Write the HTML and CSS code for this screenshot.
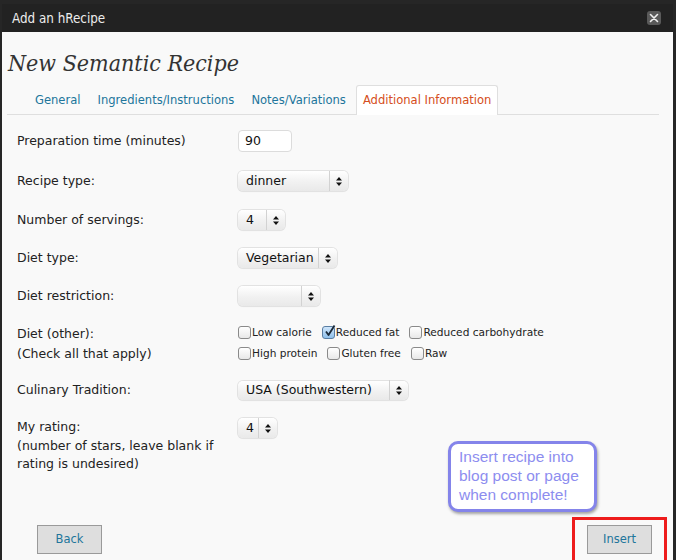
FILE: index.html
```html
<!DOCTYPE html>
<html>
<head>
<meta charset="utf-8">
<link rel="stylesheet" href="styles.css">
</head>
<body>
<div class="dialog">
  <div class="titlebar">
    <span class="title">Add an hRecipe</span>
    <span class="close"><svg width="10" height="10" viewBox="0 0 10 10"><path d="M1.5 1.5 L8.5 8.5 M8.5 1.5 L1.5 8.5" stroke="#f0f0f0" stroke-width="1.6" stroke-linecap="round"/></svg></span>
  </div>
  <div class="content">
    <h1 class="heading">New Semantic Recipe</h1>
    <ul class="tabs">
      <li class="tab">General</li>
      <li class="tab">Ingredients/Instructions</li>
      <li class="tab">Notes/Variations</li>
      <li class="tab active">Additional Information</li>
    </ul>
    <div class="form">
      <div class="row">
        <div class="label">Preparation time (minutes)</div>
        <div class="input w-prep">90</div>
      </div>
      <div class="row m1">
        <div class="label">Recipe type:</div>
        <div class="select w-type"><span class="val">dinner</span><span class="arr"><svg width="6" height="9" viewBox="0 0 6 9"><path d="M3 0 L6 3.5 L0 3.5Z M3 9 L6 5.5 L0 5.5Z" fill="#111"/></svg></span></div>
      </div>
      <div class="row m1">
        <div class="label">Number of servings:</div>
        <div class="select w-serv"><span class="val">4</span><span class="arr"><svg width="6" height="9" viewBox="0 0 6 9"><path d="M3 0 L6 3.5 L0 3.5Z M3 9 L6 5.5 L0 5.5Z" fill="#111"/></svg></span></div>
      </div>
      <div class="row">
        <div class="label">Diet type:</div>
        <div class="select w-diet"><span class="val">Vegetarian</span><span class="arr"><svg width="6" height="9" viewBox="0 0 6 9"><path d="M3 0 L6 3.5 L0 3.5Z M3 9 L6 5.5 L0 5.5Z" fill="#111"/></svg></span></div>
      </div>
      <div class="row">
        <div class="label">Diet restriction:</div>
        <div class="select w-restr"><span class="val"></span><span class="arr"><svg width="6" height="9" viewBox="0 0 6 9"><path d="M3 0 L6 3.5 L0 3.5Z M3 9 L6 5.5 L0 5.5Z" fill="#111"/></svg></span></div>
      </div>
      <div class="row top">
        <div class="label">Diet (other):<br>(Check all that apply)</div>
        <div class="checks">
          <div class="crow">
            <span class="cb"></span><span class="ct">Low calorie</span>
            <span class="cb on"><svg width="13" height="13" viewBox="0 0 13 13"><path d="M3 6.5 L5.5 10 L11.5 0.5" stroke="#1b2a3a" stroke-width="1.8" fill="none" stroke-linejoin="round"/></svg></span><span class="ct">Reduced fat</span>
            <span class="cb"></span><span class="ct">Reduced carbohydrate</span>
          </div>
          <div class="crow">
            <span class="cb"></span><span class="ct">High protein</span>
            <span class="cb"></span><span class="ct">Gluten free</span>
            <span class="cb"></span><span class="ct">Raw</span>
          </div>
        </div>
      </div>
      <div class="row m-2">
        <div class="label">Culinary Tradition:</div>
        <div class="select w-cul"><span class="val">USA (Southwestern)</span><span class="arr"><svg width="6" height="9" viewBox="0 0 6 9"><path d="M3 0 L6 3.5 L0 3.5Z M3 9 L6 5.5 L0 5.5Z" fill="#111"/></svg></span></div>
      </div>
      <div class="row top">
        <div class="label rating">My rating:<br>(number of stars, leave blank if<br>rating is undesired)</div>
        <div class="select w-rate"><span class="val">4</span><span class="arr"><svg width="6" height="9" viewBox="0 0 6 9"><path d="M3 0 L6 3.5 L0 3.5Z M3 9 L6 5.5 L0 5.5Z" fill="#111"/></svg></span></div>
      </div>
    </div>
    <div class="buttons">
      <div class="btn back">Back</div>
      <div class="highlight"><div class="btn">Insert</div></div>
    </div>
    <div class="callout">Insert recipe into<br>blog post or page<br>when complete!</div>
  </div>
</div>
</body>
</html>
```
FILE: styles.css
```css
html, body {
  margin: 0;
  padding: 0;
}
body {
  background: #262626;
  width: 676px;
  height: 560px;
  overflow: hidden;
  padding: 4px 0 0 2px;
  box-sizing: border-box;
  font-family: "DejaVu Sans", sans-serif;
}
.dialog {
  width: 671px;
  height: 556px;
  background: #f9f9f9;
  display: flex;
  flex-direction: column;
}
.titlebar {
  height: 28px;
  flex: none;
  background: #222222;
  display: flex;
  align-items: center;
  justify-content: space-between;
  padding: 0 12px 0 10px;
  box-sizing: border-box;
}
.title {
  font-family: "DejaVu Sans Condensed", "DejaVu Sans", sans-serif;
  font-stretch: condensed;
  font-size: 13.3px;
  color: #ececec;
}
.close {
  width: 14px;
  height: 14px;
  background: #5a5a5a;
  border-radius: 3px;
  display: flex;
  align-items: center;
  justify-content: center;
}
.content {
  position: relative;
  flex: 1;
  display: flex;
  flex-direction: column;
  min-height: 0;
}
.heading {
  margin: 16px 0 0 6px;
  font-family: "DejaVu Serif Condensed", "DejaVu Serif", serif;
  font-stretch: condensed;
  font-style: italic;
  font-weight: normal;
  font-size: 23px;
  line-height: 30px;
  color: #333;
}
.tabs {
  list-style: none;
  margin: 7px 14px 0 5px;
  padding: 0 0 0 21px;
  display: flex;
  gap: 3px;
  border-bottom: 1px solid #dfdfdf;
  height: 29px;
  align-items: flex-end;
}
.tab {
  font-size: 11.55px;
  color: #21759b;
  padding: 0 6px;
  height: 28px;
  line-height: 29px;
  border: 1px solid transparent;
  border-bottom: none;
  border-radius: 3px 3px 0 0;
}
.tab.active {
  color: #d54e21;
  background: #fff;
  border-color: #dfdfdf;
  height: 29px;
  margin-bottom: -1px;
}
.form {
  margin: 15px 0 0 15px;
  display: flex;
  flex-direction: column;
  gap: 18px;
}
.row {
  display: flex;
  align-items: center;
}
.row.m1 { margin-top: 1px; }
.row.m-2 { margin-top: -2px; }
.row.top {
  align-items: flex-start;
}
.label {
  width: 221px;
  flex: none;
  font-size: 12.5px;
  line-height: 20px;
  color: #222;
}
.label.rating {
  line-height: 18.5px;
}
.input {
  height: 22px;
  box-sizing: border-box;
  border: 1px solid #dcdcdc;
  border-radius: 4px;
  background: #fff;
  font-size: 12.5px;
  line-height: 20px;
  padding-left: 6px;
  color: #111;
}
.w-prep { width: 54px; }
.select {
  height: 20px;
  box-sizing: border-box;
  border-radius: 5px;
  background: linear-gradient(#ffffff, #f1f1f1 55%, #e9e9e9);
  box-shadow: 0 0 0 1px #e2e2e2, 0 1px 1px rgba(0,0,0,0.08);
  display: flex;
  align-items: center;
  font-size: 12.5px;
  color: #111;
}
.select .val {
  flex: 1;
  padding-left: 8px;
  line-height: 20px;
  white-space: nowrap;
}
.select .arr {
  width: 19px;
  height: 20px;
  border-left: 1px solid #d2d2d2;
  display: flex;
  align-items: center;
  justify-content: center;
  box-sizing: border-box;
}
.w-type { width: 110px; }
.w-serv { width: 47px; }
.w-diet { width: 99px; }
.w-restr { width: 82px; }
.w-cul { width: 170px; height: 19px; }
.w-rate { width: 39px; }
.checks {
  display: flex;
  flex-direction: column;
  gap: 7px;
  margin-top: 1px;
}
.crow {
  display: flex;
  align-items: center;
  height: 14px;
}
.cb {
  width: 13px;
  height: 13px;
  box-sizing: border-box;
  border: 1px solid #8a8a8a;
  border-radius: 3px;
  background: linear-gradient(#ffffff, #e8e8e8);
  flex: none;
  position: relative;
}
.cb.on {
  background: linear-gradient(#cfe6fb, #8fc0ec);
  border-color: #5a7ea3;
}
.cb.on svg {
  position: absolute;
  left: 0;
  top: -2px;
}
.ct {
  font-size: 10.6px;
  color: #222;
  margin-left: 1px;
  margin-right: 10px;
  white-space: nowrap;
}
.buttons {
  flex: none;
  display: flex;
  justify-content: space-between;
  align-items: flex-start;
  padding: 0 6px 0 35px;
  height: 43px;
  margin-top: auto;
  box-sizing: border-box;
}
.btn {
  width: 65px;
  height: 29px;
  flex: none;
  box-sizing: border-box;
  background: #dedede;
  border: 1px solid #9a9a9a;
  color: #21759b;
  font-size: 11.5px;
  line-height: 27px;
  text-align: center;
  margin-top: 8px;
}
.highlight {
  border: 3px solid #ee1c1c;
  width: 95px;
  height: 60px;
  flex: none;
  box-sizing: border-box;
  display: flex;
  justify-content: center;
  align-items: flex-start;
}
.highlight .btn {
  margin-top: 5px;
}
.callout {
  position: absolute;
  left: 446px;
  top: 409px;
  width: 149px;
  height: 71px;
  box-sizing: border-box;
  border: 3px solid #8484ea;
  border-radius: 10px;
  background: #fff;
  box-shadow: 1px 2px 3px rgba(0,0,0,0.35);
  font-family: "Liberation Sans", Arial, sans-serif;
  font-size: 15.5px;
  line-height: 19px;
  color: #8d8def;
  padding: 3px 0 0 8px;
}
```
